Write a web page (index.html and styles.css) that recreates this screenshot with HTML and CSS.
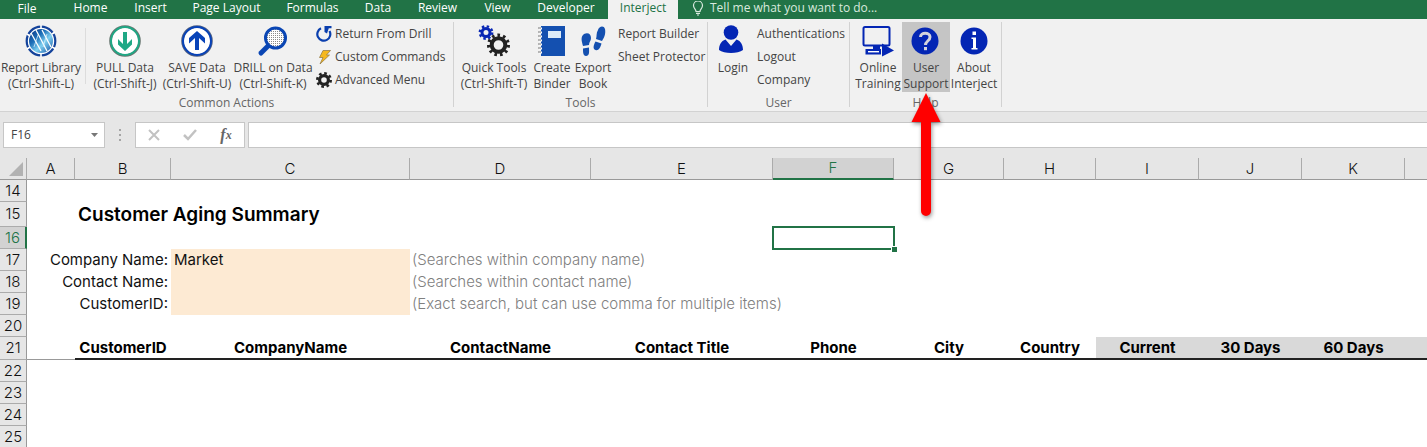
FILE: index.html
```html
<!DOCTYPE html>
<html lang="en">
<head>
<meta charset="utf-8">
<title>Customer Aging Summary</title>
<link rel="stylesheet" href="styles.css">
</head>
<body>
<nav class="tabs">
  <button class="tab tab-file">File</button>
  <button class="tab">Home</button>
  <button class="tab">Insert</button>
  <button class="tab">Page Layout</button>
  <button class="tab">Formulas</button>
  <button class="tab">Data</button>
  <button class="tab">Review</button>
  <button class="tab">View</button>
  <button class="tab">Developer</button>
  <button class="tab active">Interject</button>
  <button class="tell-me">
    <svg width="12" height="15" viewBox="0 0 12 15" fill="none" stroke="#d9eadf" stroke-width="1.2"><path d="M4 10.500C4 8 1.500 7.500 1.500 4.500a4.500 4.500 0 0 1 9 0C10.500 7.500 8 8 8 10.500zM4 12.300h4M5 14h2"/></svg>
    Tell me what you want to do...
  </button>
</nav>

<header class="ribbon">
  <section class="group">
    <div class="tools">
      <button class="big library">
        <svg width="32" height="32" viewBox="0 0 32 32">
          <defs><linearGradient id="globe" x1="0" y1="0" x2="1" y2="1"><stop offset="0" stop-color="#0a2f80"/><stop offset=".35" stop-color="#1d6fb8"/><stop offset=".6" stop-color="#7fd0f0"/><stop offset="1" stop-color="#0d4aa0"/></linearGradient></defs>
          <circle cx="16" cy="16" r="14.300" fill="#fff" stroke="#14439b" stroke-width="2.200"/>
          <circle cx="16" cy="16" r="12" fill="url(#globe)"/>
          <path d="M6 8l10 18M11 5l11 21M17 5l9 17" stroke="#fff" stroke-width="1.300" fill="none"/>
          <path d="M9 22l4-12M18 22l4-13" stroke="#d5effa" stroke-width=".8" fill="none"/>
          <path d="M16 0v4M16 28v4M2 9l3 2M27 22l4 2M2 24l3-2M27 9l3-2" stroke="#fff" stroke-width="1.600"/>
        </svg>
        <span>Report Library<br>(Ctrl-Shift-L)</span>
      </button>
      <i class="divider"></i>
      <button class="big">
        <svg width="32" height="32" viewBox="0 0 32 32"><circle cx="16" cy="16" r="14.500" fill="#fff" stroke="#66756f" stroke-width="2.600"/><circle cx="16" cy="16" r="14" fill="none" stroke="#1fa885" stroke-width="2"/><path d="M14 7h4v12l5-5v5.500L16 26l-7-6.500V14l5 5z" fill="#1fa885"/></svg>
        <span>PULL Data<br>(Ctrl-Shift-J)</span>
      </button>
      <button class="big">
        <svg width="32" height="32" viewBox="0 0 32 32"><circle cx="16" cy="16" r="14.500" fill="#fff" stroke="#526080" stroke-width="2.600"/><circle cx="16" cy="16" r="14" fill="none" stroke="#0843b8" stroke-width="2"/><path d="M14 25h4V13l6 5.500V13L16 6 8 13v5.500L14 13z" fill="#0843b8"/></svg>
        <span>SAVE Data<br>(Ctrl-Shift-U)</span>
      </button>
      <button class="big drill">
        <svg width="32" height="32" viewBox="0 0 32 32">
          <defs><pattern id="mesh" width="2" height="2" patternUnits="userSpaceOnUse"><rect width="2" height="2" fill="#fff"/><rect width="1" height="1" fill="#8b8b8b"/></pattern></defs>
          <path d="M12 20L4 28" stroke="#0a46b4" stroke-width="5" stroke-linecap="round"/>
          <circle cx="18.500" cy="13" r="10" fill="url(#mesh)" stroke="#0a46b4" stroke-width="3"/>
        </svg>
        <span>DRILL on Data<br>(Ctrl-Shift-K)</span>
      </button>
      <div class="list">
        <button class="small"><svg width="16" height="16" viewBox="0 0 16 16"><path d="M5 2.300A6.500 6.500 0 1 0 13.500 5" fill="none" stroke="#0a3fae" stroke-width="2.200"/><path d="M8.500 0H15.500V2.300H12.800L11 7.500 8.500 6z" fill="#0a3fae"/></svg>Return From Drill</button>
        <button class="small"><svg width="16" height="16" viewBox="0 0 16 16"><path d="M7 1.500h7.500L10.500 6h3L4 15l3-6.500H3.500z" fill="#f6b81c" stroke="#8c7440" stroke-width=".7"/></svg>Custom Commands</button>
        <button class="small"><svg width="16" height="16" viewBox="0 0 16 16" fill="none" stroke="#222"><circle cx="8" cy="8" r="4.400" stroke-width="3.200"/><circle cx="8" cy="8" r="6.700" stroke-width="2.600" stroke-dasharray="2.630 2.630"/></svg>Advanced Menu</button>
      </div>
    </div>
    <h2>Common Actions</h2>
  </section>

  <section class="group group-tools">
    <div class="tools">
      <button class="big">
        <svg width="32" height="32" viewBox="0 0 32 32" fill="none"><g stroke="#0a28b4"><circle cx="8" cy="7.500" r="4" stroke-width="3"/><circle cx="8" cy="7.500" r="6.200" stroke-width="2.400" stroke-dasharray="2.430 2.430"/></g><g stroke="#222"><circle cx="20.500" cy="20" r="6.800" stroke-width="4"/><circle cx="20.500" cy="20" r="9.800" stroke-width="3.400" stroke-dasharray="2.600 3"/></g></svg>
        <span>Quick Tools<br>(Ctrl-Shift-T)</span>
      </button>
      <button class="big binder">
        <svg width="32" height="32" viewBox="0 0 32 32"><path d="M5 1h24v30H5z" fill="#1450b0"/><path d="M12 6h13v7H12z" fill="#dcebf8"/><path d="M4.500 2.500v27" stroke="#fff" stroke-width="3" stroke-dasharray="2 2"/><path d="M3.500 2.500v27" stroke="#777" stroke-width="3" stroke-dasharray="1 3"/></svg>
        <span>Create<br>Binder</span>
      </button>
      <button class="big export">
        <svg width="32" height="32" viewBox="0 0 32 32" fill="#1450b0"><path d="M7 9c4-2 7 0 7 4 0 3-2 4-2 7l-6 1C5 17 3 12 7 9zM6 23.500l6-1c0 4 1 8-3 8.500C6 31 6 27 6 23.500zM21 5c1-4 6-5 7-1 1 5-1 9-3 12l-6-2c1-3 0-6 2-9zM18.500 16.500l6 2c-1 4-3 7.500-6 6.500-3-1-2-5 0-8.500z"/></svg>
        <span>Export<br>Book</span>
      </button>
      <div class="list list-text">
        <button class="small">Report Builder</button>
        <button class="small">Sheet Protector</button>
      </div>
    </div>
    <h2>Tools</h2>
  </section>

  <section class="group group-user">
    <div class="tools">
      <button class="big login">
        <svg width="32" height="32" viewBox="0 0 32 32" fill="#0426b4"><circle cx="14" cy="7.500" r="7.300"/><path d="M8.500 14.500L14 21l5.500-6.500C24 16 26 20 26 25c-5 4-19 4-24 0 0-5 2-9 6.500-10.500z"/></svg>
        <span>Login</span>
      </button>
      <div class="list">
        <button class="small">Authentications</button>
        <button class="small">Logout</button>
        <button class="small">Company</button>
      </div>
    </div>
    <h2>User</h2>
  </section>

  <section class="group group-help">
    <div class="tools">
      <button class="big">
        <svg width="32" height="32" viewBox="0 0 32 32"><rect x="1.500" y="2" width="26" height="18.500" rx="1.500" fill="none" stroke="#0426b4" stroke-width="2"/><path d="M11 21h7v3h-7zM3.500 24H19v5.500H3.500z" fill="#0426b4"/><path d="M6 26.700h11" stroke="#fff" stroke-width="1.400"/><path d="M20 18.500L32 25.500 20 31.500z" fill="#0426b4"/></svg>
        <span>Online<br>Training</span>
      </button>
      <button class="big selected">
        <svg width="32" height="32" viewBox="0 0 32 32"><circle cx="15" cy="16" r="13.500" fill="#0426b4"/><path d="M10.500 12c0-5 9.500-5 9.500 0 0 4-4.500 4-4.500 8" fill="none" stroke="#d4d4dc" stroke-width="3"/><path d="M14 22h3v3.200h-3z" fill="#d4d4dc"/></svg>
        <span>User<br>Support</span>
      </button>
      <button class="big">
        <svg width="32" height="32" viewBox="0 0 32 32"><circle cx="16" cy="16" r="13.500" fill="#0426b4"/><path d="M14.500 6.500h3.500V10h-3.500zM13.500 12.500H18V23h1.500v1.500h-6V23H15v-9h-1.500z" fill="#fff"/></svg>
        <span>About<br>Interject</span>
      </button>
    </div>
    <h2>Help</h2>
  </section>
  <svg class="pointer" width="40" height="132" viewBox="0 0 40 132"><path d="M20 3L34.500 32H25v89a5 5 0 0 1-10 0V32H5.500z" fill="#f00"/></svg>
</header>

<div class="formula-bar">
  <button class="name-box">F16<svg width="9" height="5" viewBox="0 0 9 5"><path d="M1 0h7L4.500 4z" fill="#777"/></svg></button>
  <svg class="grip" width="4" height="12" viewBox="0 0 4 12" fill="#a5a5a5"><path d="M1 0h2v2H1zM1 5h2v2H1zM1 10h2v2H1z"/></svg>
  <div class="actions">
    <button aria-label="Cancel"><svg width="12" height="12" viewBox="0 0 12 12"><path d="M1 1l10 10M11 1L1 11" stroke="#c2c2c2" stroke-width="2"/></svg></button>
    <button aria-label="Enter"><svg width="14" height="12" viewBox="0 0 14 12"><path d="M1 6l4 4 8-9" fill="none" stroke="#c2c2c2" stroke-width="2.500"/></svg></button>
    <button class="fx" aria-label="Insert function">f<span>x</span></button>
  </div>
  <input class="formula" aria-label="Formula">
</div>

<table class="sheet">
  <colgroup><col class="c-head"><col class="c-a"><col class="c-b"><col class="c-c"><col class="c-d"><col class="c-e"><col class="c-f"><col class="c-g"><col class="c-h"><col class="c-i"><col class="c-i"><col class="c-i"><col></colgroup>
  <thead><tr><th class="corner"><svg width="14" height="14" viewBox="0 0 14 14"><path d="M14 0v14H0z" fill="#b2b2b2"/></svg></th><th>A</th><th>B</th><th>C</th><th>D</th><th>E</th><th class="current">F</th><th>G</th><th>H</th><th>I</th><th>J</th><th>K</th><th class="last"></th></tr></thead>
  <tbody>
    <tr><th>14</th><td colspan="12"></td></tr>
    <tr class="title-row"><th>15</th><td></td><td class="title" colspan="11">Customer Aging Summary</td></tr>
    <tr><th class="current">16</th><td colspan="5"></td><td class="cell-active"><i></i></td><td colspan="6"></td></tr>
    <tr><th>17</th><td class="label" colspan="2"><label for="company">Company Name:</label></td><td class="entry"><input id="company" value="Market"></td><td class="hint" colspan="9">(Searches within company name)</td></tr>
    <tr><th>18</th><td class="label" colspan="2"><label for="contact">Contact Name:</label></td><td class="entry"><input id="contact"></td><td class="hint" colspan="9">(Searches within contact name)</td></tr>
    <tr><th>19</th><td class="label" colspan="2"><label for="customer">CustomerID:</label></td><td class="entry"><input id="customer"></td><td class="hint" colspan="9">(Exact search, but can use comma for multiple items)</td></tr>
    <tr><th>20</th><td colspan="12"></td></tr>
    <tr class="fields"><th>21</th><td class="blank"></td><td>CustomerID</td><td>CompanyName</td><td>ContactName</td><td>Contact Title</td><td>Phone</td><td>City</td><td>Country</td><td class="aging">Current</td><td class="aging">30 Days</td><td class="aging">60 Days</td><td class="aging"></td></tr>
    <tr><th>22</th><td colspan="12"></td></tr>
    <tr><th>23</th><td colspan="12"></td></tr>
    <tr><th>24</th><td colspan="12"></td></tr>
    <tr><th>25</th><td colspan="12"></td></tr>
  </tbody>
</table>
</body>
</html>
```

FILE: styles.css
```css
* { box-sizing: border-box; }
body { margin: 0; background: #fff; font: 12px/16px "Open Sans", "Noto Sans", sans-serif; color: #444; overflow-x: hidden; }
button { font: inherit; color: inherit; background: none; border: 0; padding: 0; margin: 0; white-space: nowrap; }
svg { display: block; flex: none; }

.tabs { display: grid; grid-template-columns: 60px 61px 59px 93px 79px 52px 67px 53px 84px 70px 1fr; height: 19px; background: #217346; color: #fff; }
.tab { padding-bottom: 5px; }
.tab-file { padding: 0 6px 3px 0; }
.tab.active { background: #f1f1f1; color: #217346; }
.tell-me { display: flex; align-items: center; gap: 6px; padding: 0 0 5px 14px; color: #d9eadf; }

.ribbon { position: relative; display: flex; height: 93px; padding: 3px 0; background: #f1f1f1; border-bottom: 1px solid #d2d2d2; }
.group { width: 454px; height: 85px; border-right: 1px solid #d2d2d2; }
.group-tools { width: 254px; }
.group-user { width: 142px; }
.group-help { width: 152px; }
.group h2 { margin: 0; font-size: 12px; font-weight: 400; line-height: 16px; text-align: center; color: #666; }
.tools { display: flex; height: 73px; }
.group-tools .tools, .group-user .tools, .group-help .tools { padding-left: 4px; }
.big { display: flex; flex-direction: column; align-items: center; gap: 3px; width: 72px; height: 70px; padding-top: 3px; }
.big.library { width: 82px; }
.big.drill { width: 80px; }
.big.binder { width: 44px; }
.big.export { width: 38px; }
.big.login { width: 42px; }
.group-help .big { width: 48px; }
.big.selected { background: #c5c5c5; }
.divider { width: 1px; height: 56px; margin: 6px 3px 0; background: #dcdcdc; }
.list { display: flex; flex-direction: column; gap: 3px; padding: 2px 0 0 3px; }
.list-text { padding-left: 6px; }
.small { display: flex; align-items: center; gap: 3px; height: 20px; }
.pointer { position: absolute; left: 906px; top: 71px; z-index: 2; filter: drop-shadow(1px 2px 2px #0006); }

.formula-bar { display: flex; align-items: center; height: 46px; padding: 0 0 0 3px; background: #e6e6e6; }
.name-box, .actions, .formula { height: 26px; background: #fff; border: 1px solid #c6c6c6; }
.name-box { display: flex; align-items: center; justify-content: space-between; width: 102px; padding: 0 5px 0 7px; }
.grip { margin: 0 13px; }
.actions { display: flex; align-items: center; justify-content: space-around; width: 110px; margin-right: 3px; }
.actions button { width: 24px; display: flex; justify-content: center; }
.actions .fx { font: italic bold 16px/20px "Liberation Serif", serif; color: #666; }
.fx span { font-size: 12px; }
.formula { flex: 1; min-width: 0; border-right: 0; padding: 0 6px; font: inherit; }

.sheet { width: 100%; table-layout: fixed; border-collapse: separate; border-spacing: 0; font: 15px/20px Inter, sans-serif; font-weight: 300; color: #111; }
.c-head { width: 27px; }
.c-a { width: 48px; }
.c-b { width: 96px; }
.c-c { width: 239px; }
.c-d { width: 181px; }
.c-e { width: 182px; }
.c-f { width: 121px; }
.c-g { width: 110px; }
.c-h { width: 92px; }
.c-i { width: 103px; }
.sheet th, .sheet td { height: 22px; padding: 0; white-space: nowrap; }
.sheet th { font-weight: 300; background: #e6e6e6; border-bottom: 1px solid #ababab; }
.sheet thead th { border-bottom-color: #999; border-right: 1px solid #ababab; }
.sheet thead .last { border-right: 0; }
.sheet tbody th { border-right: 1px solid #999; }
.corner svg { margin: 0 3px 0 auto; }
.sheet .current { background: #d2d2d2; color: #217346; }
.sheet thead .current { border-bottom: 2px solid #217346; }
.sheet tbody .current { border-right: 2px solid #217346; }
.sheet .title-row th { height: 25px; }
.sheet .title { padding-left: 3px; font-size: 19px; font-weight: 600; color: #000; }
.cell-active { position: relative; outline: 2px solid #217346; outline-offset: -1px; }
.cell-active i { position: absolute; right: -3px; bottom: -3px; width: 6px; height: 6px; background: #217346; border: solid #fff; border-width: 1px 0 0 1px; }
.label { text-align: right; font-weight: 400; }
.sheet .label { padding-right: 3px; }
.entry { background: #fdead3; font-weight: 400; }
.entry input { display: block; width: 100%; height: 20px; padding: 0 3px; border: 0; background: transparent; font: inherit; color: inherit; }
.sheet .hint { padding-left: 2px; color: #808080; }
.sheet .fields td { height: 23px; border-bottom: 2px solid #222; text-align: center; font-weight: 700; color: #000; }
.sheet .fields .blank { border-bottom: 1px solid #999; }
.aging { background: #d9d9d9; }
```
